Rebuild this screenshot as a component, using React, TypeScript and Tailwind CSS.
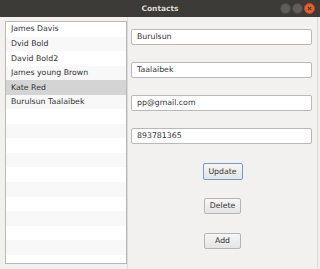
const contacts = [
  "James Davis",
  "Dvid Bold",
  "David Bold2",
  "James young Brown",
  "Kate Red",
  "Burulsun Taalaibek",
];

const fields = ["Burulsun", "Taalaibek", "pp@gmail.com", "893781365"];

export default function App() {
  const rows = Array.from({ length: 17 }, (_, i) => contacts[i] ?? "");

  return (
    <div
      className="w-[320px] h-[269px] bg-[#f2f1f0] flex flex-col overflow-hidden text-[7.8px] text-[#333333]"
      style={{ fontFamily: '"DejaVu Sans", sans-serif' }}
    >
      <div className="relative h-[17px] shrink-0 bg-[#3c3b37] flex items-center justify-center">
        <span className="text-[7.5px] font-bold text-[#dfdbd2]">Contacts</span>
        <div className="absolute right-[5px] top-[3px] flex gap-[1px]">
          <div className="w-[11px] h-[11px] rounded-full bg-[#5f5e5a] border border-[#4a4945]" />
          <div className="w-[11px] h-[11px] rounded-full bg-[#5f5e5a] border border-[#4a4945]" />
          <div className="w-[11px] h-[11px] rounded-full bg-[#e9612e] border border-[#c24b1f] flex items-center justify-center">
            <svg width="5" height="5" viewBox="0 0 5 5">
              <path d="M0.8 0.8 L4.2 4.2 M4.2 0.8 L0.8 4.2" stroke="#3c3b37" strokeWidth="1.1" />
            </svg>
          </div>
        </div>
      </div>

      <div className="flex flex-1">
        <div className="ml-[5px] mt-[4px] w-[122px] h-[243px] border border-[#b8b8b8] bg-white overflow-hidden">
          {rows.map((name, i) => (
            <div
              key={i}
              className={
                "h-[14.55px] flex items-center pl-[5px] whitespace-nowrap " +
                (i === 4 ? "bg-[#d4d4d4]" : i % 2 === 1 ? "bg-[#f8f8f8]" : "bg-white")
              }
            >
              {name}
            </div>
          ))}
        </div>

        <div className="w-[191px] border-l border-r border-[#dadada] flex flex-col pl-[3px]">
          {fields.map((v, i) => (
            <div
              key={v}
              className={
                "w-[181px] h-[16px] bg-white border border-[#b9b9b9] rounded-[2px] flex items-center pl-[5px] " +
                (i === 0 ? "mt-[12px]" : "mt-[17px]")
              }
            >
              {v}
            </div>
          ))}

          <div className="flex flex-col items-center pr-[3px]">
            <button className="mt-[19px] w-[40px] h-[17px] rounded-[2px] border border-[#6a9fd4] bg-gradient-to-b from-[#f6f6f6] to-[#e4e4e4] text-[7.8px] text-[#333]">
              Update
            </button>
            <button className="mt-[18px] w-[37px] h-[16px] rounded-[2px] border border-[#b5b5b5] bg-gradient-to-b from-[#f6f6f6] to-[#e4e4e4] text-[7.8px] text-[#333]">
              Delete
            </button>
            <button className="mt-[19px] w-[37px] h-[16px] rounded-[2px] border border-[#b5b5b5] bg-gradient-to-b from-[#f6f6f6] to-[#e4e4e4] text-[7.8px] text-[#333]">
              Add
            </button>
          </div>
        </div>
      </div>
    </div>
  );
}
